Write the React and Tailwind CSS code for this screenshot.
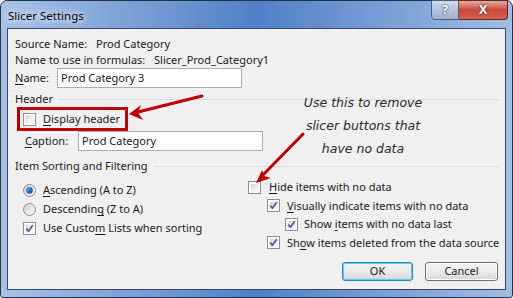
import React from "react";

const U = ({ children }) => <span className="underline underline-offset-[2px] decoration-[1px]">{children}</span>;

const Check = ({ checked }) => (
  <span className="flex w-[13px] h-[13px] shrink-0 border border-[#8e8f8f] bg-white p-px">
    <span className="flex w-full h-full items-center justify-center bg-gradient-to-br from-[#d4d4d4] via-[#ececec] to-[#fbfbfb] border border-[#f4f4f4]">
      {checked && (
        <svg width="9" height="9" viewBox="0 0 9 9" className="shrink-0">
          <path d="M1.2 4.6 L3.4 7.2 L7.8 1.2" fill="none" stroke="#4a5f97" strokeWidth="1.8" strokeLinejoin="round" />
        </svg>
      )}
    </span>
  </span>
);

const Radio = ({ checked }) => (
  <span className="flex w-[13px] h-[13px] shrink-0 rounded-full border border-[#8e8f8f] bg-gradient-to-br from-[#d4d4d4] to-[#fbfbfb] items-center justify-center">
    {checked && <span className="w-[7px] h-[7px] rounded-full bg-gradient-to-br from-[#8cc4ef] via-[#2a7ac6] to-[#0d4f96] border border-[#1c5a9a]" />}
  </span>
);

const Group = ({ children }) => (
  <div className="flex items-center h-[16px] pr-[6px]">
    <span>{children}</span>
    <span className="flex-1 ml-[5px] border-t border-[#d5dfe5]" />
  </div>
);

export default function App() {
  return (
    <div className="relative w-[513px] h-[298px] bg-white font-['Segoe_UI','Noto_Sans',sans-serif] text-[11px] whitespace-nowrap text-[#1a1a1a]">
      <div className="flex flex-col w-full h-full rounded-t-[7px] rounded-b-[3px] border border-[#22324a] px-[6px] bg-gradient-to-r from-[#a9c2e6] via-[#5080c6] to-[#a2bde4]">
        <div className="flex h-[27px] justify-between -mx-[1px]">
          <div className="pl-[2px] pt-[6px] text-[11.5px] text-black [text-shadow:0_0_6px_#ffffff,0_0_10px_#ffffff]">Slicer Settings</div>
          <div className="flex -mt-[1px] h-[20px] mr-[-1px]">
            <div className="flex w-[28px] h-full items-center justify-center rounded-bl-[4px] border border-[#4a5e7c] bg-gradient-to-b from-[#d3deed] via-[#b3c4dc] to-[#9fb2cf] text-white font-bold text-[13px] [text-shadow:0_0_2px_#2a3a50,0_0_1px_#2a3a50]">?</div>
            <div className="flex w-[49px] h-full items-center justify-center rounded-br-[4px] border border-l-0 border-[#5a2a2a] bg-gradient-to-b from-[#e8a99c] via-[#c8473a] to-[#d8604f] text-white font-bold text-[13px] [text-shadow:0_0_2px_#3a1a1a,0_0_1px_#3a1a1a]">X</div>
          </div>
        </div>
        <div className="flex flex-col h-[262px] border border-[#34496a] bg-[#f0f0f0] pl-[7px] pt-[7px]">
          <div className="flex items-center h-[16px]">
            <span className="w-[81px]">Source Name:</span>
            <span>Prod Category</span>
          </div>
          <div className="flex items-center h-[16px]">
            <span className="w-[139px]">Name to use in formulas:</span>
            <span>Slicer_Prod_Category1</span>
          </div>
          <div className="flex items-center h-[20px]">
            <span className="w-[42px]"><U>N</U>ame:</span>
            <div className="flex items-center w-[185px] h-[20px] border border-[#abadb3] bg-white pl-[3px]">Prod Category 3</div>
          </div>
          <div className="mt-[3px]">
            <Group>Header</Group>
          </div>
          <div className="flex items-center ml-[2px] w-[111px] h-[24px] border-[3px] border-[#c00000] pl-[3px] gap-[7px]">
            <Check />
            <span><U>D</U>isplay header</span>
          </div>
          <div className="flex items-center h-[20px] pl-[10px]">
            <span className="w-[53px]"><U>C</U>aption:</span>
            <div className="flex items-center w-[185px] h-[20px] border border-[#abadb3] bg-white pl-[3px]">Prod Category</div>
          </div>
          <div className="mt-[7px]">
            <Group>Item Sorting and Filtering</Group>
          </div>
          <div className="flex">
            <div className="flex flex-col w-[233px] pt-[7px] pl-[8px]">
              <div className="flex items-center h-[19px] gap-[7px]">
                <Radio checked />
                <span><U>A</U>scending (A to Z)</span>
              </div>
              <div className="flex items-center h-[19px] gap-[7px]">
                <Radio />
                <span>Descendin<U>g</U> (Z to A)</span>
              </div>
              <div className="flex items-center h-[19px] gap-[7px]">
                <Check checked />
                <span>Use Custo<U>m</U> Lists when sorting</span>
              </div>
            </div>
            <div className="flex flex-col pt-[4px]">
              <div className="flex items-center h-[18.5px] gap-[8px]">
                <Check />
                <span><U>H</U>ide items with no data</span>
              </div>
              <div className="flex items-center h-[18.5px] gap-[7px] pl-[19px]">
                <Check checked />
                <span><U>V</U>isually indicate items with no data</span>
              </div>
              <div className="flex items-center h-[18.5px] gap-[6px] pl-[37px]">
                <Check checked />
                <span>Show <U>i</U>tems with no data last</span>
              </div>
              <div className="flex items-center h-[18.5px] gap-[7px] pl-[19px]">
                <Check checked />
                <span>Sh<U>o</U>w items deleted from the data source</span>
              </div>
            </div>
          </div>
          <div className="flex justify-end gap-[12px] pr-[7px] mt-[10px]">
            <div className="flex items-center justify-center w-[71px] h-[19px] rounded-[3px] border border-[#3c7fb1] bg-gradient-to-b from-[#f2f2f2] via-[#ebebeb] to-[#d6d6d6] shadow-[inset_0_0_0_1px_#48d7fb]">OK</div>
            <div className="flex items-center justify-center w-[73px] h-[19px] rounded-[3px] border border-[#707070] bg-gradient-to-b from-[#f2f2f2] via-[#ebebeb] to-[#d6d6d6] shadow-[inset_0_0_0_1px_#fcfcfc]">Cancel</div>
          </div>
        </div>
      </div>

      <div className="absolute left-[288px] top-[91px] w-[150px] text-center leading-[23px] text-[12.5px] text-[#2a2a2a] font-['DejaVu_Sans',sans-serif] italic">
        <div>Use this to remove</div>
        <div>slicer buttons that</div>
        <div>have no data</div>
      </div>

      <svg className="absolute left-0 top-0 pointer-events-none" width="513" height="298" viewBox="0 0 513 298">
        <line x1="202" y1="96" x2="136" y2="112.5" stroke="#c00000" strokeWidth="3" strokeLinecap="round" />
        <polygon points="129,114 141,105 138,112.5 143,120" fill="#c00000" />
        <line x1="303" y1="134" x2="262" y2="176" stroke="#c00000" strokeWidth="3" strokeLinecap="round" />
        <polygon points="256,183 262,170 264,176 271,178" fill="#c00000" />
      </svg>
    </div>
  );
}
